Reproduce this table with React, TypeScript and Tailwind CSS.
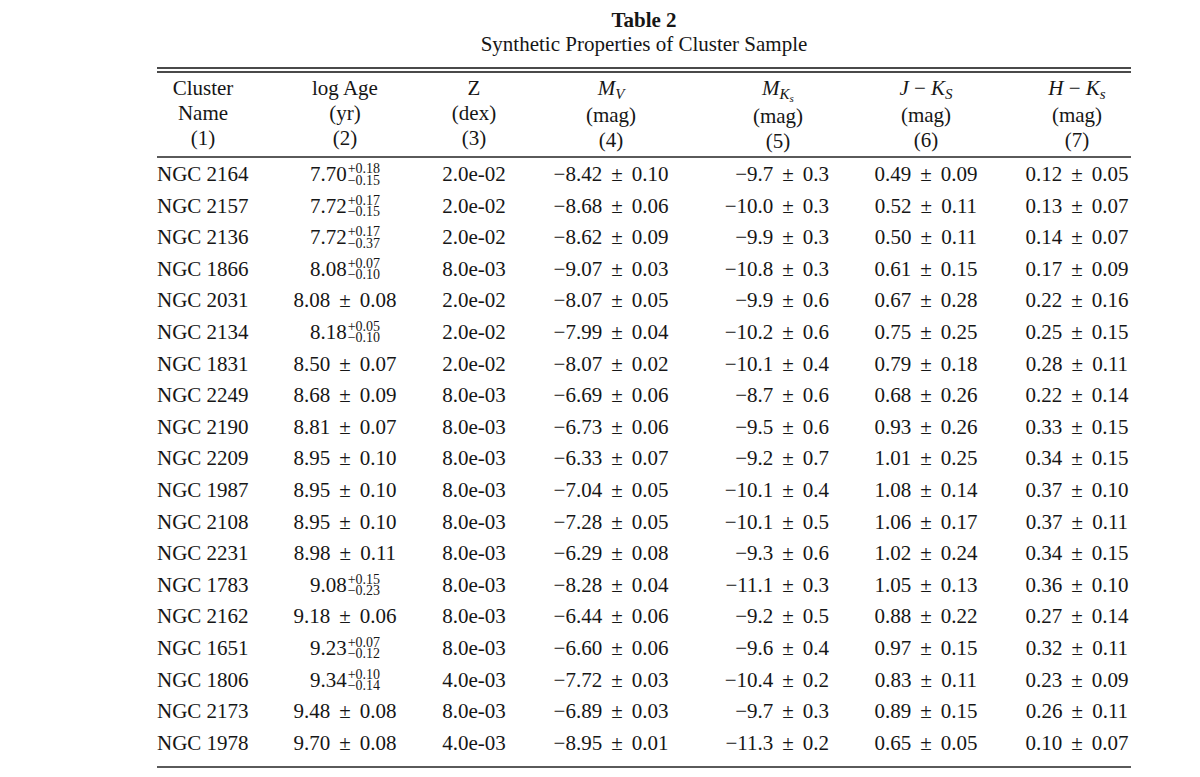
import React from "react";

type Pm = [string, string];
type Age = [string, string] | [string, string, string];
type Row = [string, Age, string, Pm, Pm, Pm, Pm];

const rows: Row[] = [
  ["NGC 2164", ["7.70", "+0.18", "−0.15"], "2.0e-02", ["−8.42", "0.10"], ["−9.7", "0.3"], ["0.49", "0.09"], ["0.12", "0.05"]],
  ["NGC 2157", ["7.72", "+0.17", "−0.15"], "2.0e-02", ["−8.68", "0.06"], ["−10.0", "0.3"], ["0.52", "0.11"], ["0.13", "0.07"]],
  ["NGC 2136", ["7.72", "+0.17", "−0.37"], "2.0e-02", ["−8.62", "0.09"], ["−9.9", "0.3"], ["0.50", "0.11"], ["0.14", "0.07"]],
  ["NGC 1866", ["8.08", "+0.07", "−0.10"], "8.0e-03", ["−9.07", "0.03"], ["−10.8", "0.3"], ["0.61", "0.15"], ["0.17", "0.09"]],
  ["NGC 2031", ["8.08", "0.08"], "2.0e-02", ["−8.07", "0.05"], ["−9.9", "0.6"], ["0.67", "0.28"], ["0.22", "0.16"]],
  ["NGC 2134", ["8.18", "+0.05", "−0.10"], "2.0e-02", ["−7.99", "0.04"], ["−10.2", "0.6"], ["0.75", "0.25"], ["0.25", "0.15"]],
  ["NGC 1831", ["8.50", "0.07"], "2.0e-02", ["−8.07", "0.02"], ["−10.1", "0.4"], ["0.79", "0.18"], ["0.28", "0.11"]],
  ["NGC 2249", ["8.68", "0.09"], "8.0e-03", ["−6.69", "0.06"], ["−8.7", "0.6"], ["0.68", "0.26"], ["0.22", "0.14"]],
  ["NGC 2190", ["8.81", "0.07"], "8.0e-03", ["−6.73", "0.06"], ["−9.5", "0.6"], ["0.93", "0.26"], ["0.33", "0.15"]],
  ["NGC 2209", ["8.95", "0.10"], "8.0e-03", ["−6.33", "0.07"], ["−9.2", "0.7"], ["1.01", "0.25"], ["0.34", "0.15"]],
  ["NGC 1987", ["8.95", "0.10"], "8.0e-03", ["−7.04", "0.05"], ["−10.1", "0.4"], ["1.08", "0.14"], ["0.37", "0.10"]],
  ["NGC 2108", ["8.95", "0.10"], "8.0e-03", ["−7.28", "0.05"], ["−10.1", "0.5"], ["1.06", "0.17"], ["0.37", "0.11"]],
  ["NGC 2231", ["8.98", "0.11"], "8.0e-03", ["−6.29", "0.08"], ["−9.3", "0.6"], ["1.02", "0.24"], ["0.34", "0.15"]],
  ["NGC 1783", ["9.08", "+0.15", "−0.23"], "8.0e-03", ["−8.28", "0.04"], ["−11.1", "0.3"], ["1.05", "0.13"], ["0.36", "0.10"]],
  ["NGC 2162", ["9.18", "0.06"], "8.0e-03", ["−6.44", "0.06"], ["−9.2", "0.5"], ["0.88", "0.22"], ["0.27", "0.14"]],
  ["NGC 1651", ["9.23", "+0.07", "−0.12"], "8.0e-03", ["−6.60", "0.06"], ["−9.6", "0.4"], ["0.97", "0.15"], ["0.32", "0.11"]],
  ["NGC 1806", ["9.34", "+0.10", "−0.14"], "4.0e-03", ["−7.72", "0.03"], ["−10.4", "0.2"], ["0.83", "0.11"], ["0.23", "0.09"]],
  ["NGC 2173", ["9.48", "0.08"], "8.0e-03", ["−6.89", "0.03"], ["−9.7", "0.3"], ["0.89", "0.15"], ["0.26", "0.11"]],
  ["NGC 1978", ["9.70", "0.08"], "4.0e-03", ["−8.95", "0.01"], ["−11.3", "0.2"], ["0.65", "0.05"], ["0.10", "0.07"]],
];

// column grid: centres at 203, 345, 474, 611, 778, 926, 1077
const cols = "grid grid-cols-[92px_192px_66px_208px_126px_170px_132px] w-[986px]";

function PlusMinus({ v }: { v: Pm }) {
  return (
    <span className="whitespace-nowrap">
      {v[0]}
      <span className="px-[9px]">±</span>
      {v[1]}
    </span>
  );
}

function AgeCell({ a }: { a: Age }) {
  if (a.length === 2) return <PlusMinus v={a} />;
  return (
    <span className="whitespace-nowrap">
      {a[0]}
      <span className="relative -top-[8px] ml-[1px] inline-flex flex-col text-left text-[14px] leading-[11.5px]">
        <span>{a[1]}</span>
        <span>{a[2]}</span>
      </span>
    </span>
  );
}

function Sub({ children, small }: { children: React.ReactNode; small?: boolean }) {
  return (
    <span className={small ? "relative top-[3px] text-[11px] italic" : "relative top-[4px] text-[15px] italic"}>
      {children}
    </span>
  );
}

function HeadCell({ top, unit, num }: { top: React.ReactNode; unit: string; num: number }) {
  return (
    <div className="flex flex-col items-center whitespace-nowrap">
      <span>{top}</span>
      <span>{unit}</span>
      <span>({num})</span>
    </div>
  );
}

export default function App() {
  return (
    <div className="w-[1200px] h-[777px] overflow-hidden bg-white text-[#161616] font-['Liberation_Serif',serif] text-[21px]">
      <div className="ml-[157px] w-[974px] pt-[8px]">
        <div className="text-center leading-[24px]">
          <div className="font-bold">Table 2</div>
          <div>Synthetic Properties of Cluster Sample</div>
        </div>

        <div className="mt-[11px] h-[2px] bg-[#4a4a4a]" />
        <div className="mt-[2px] h-[2px] bg-[#4a4a4a]" />

        <div className={`${cols} pt-[3px] leading-[25px]`}>
          <HeadCell top="Cluster" unit="Name" num={1} />
          <HeadCell top="log Age" unit="(yr)" num={2} />
          <HeadCell top="Z" unit="(dex)" num={3} />
          <HeadCell
            top={
              <>
                <i>M</i>
                <Sub>V</Sub>
              </>
            }
            unit="(mag)"
            num={4}
          />
          <HeadCell
            top={
              <>
                <i>M</i>
                <Sub>
                  K<Sub small>s</Sub>
                </Sub>
              </>
            }
            unit="(mag)"
            num={5}
          />
          <HeadCell
            top={
              <>
                <i>J</i> − <i>K</i>
                <Sub>S</Sub>
              </>
            }
            unit="(mag)"
            num={6}
          />
          <HeadCell
            top={
              <>
                <i>H</i> − <i>K</i>
                <Sub>s</Sub>
              </>
            }
            unit="(mag)"
            num={7}
          />
        </div>

        <div className="mt-[2px] h-[2px] bg-[#5a5a5a]" />

        <div className="pt-[1px]">
          {rows.map((r) => (
            <div key={r[0]} className={`${cols} h-[31.6px] leading-[31.6px]`}>
              <div className="whitespace-nowrap text-left">{r[0]}</div>
              <div className="text-center">
                <AgeCell a={r[1]} />
              </div>
              <div className="text-center whitespace-nowrap">{r[2]}</div>
              <div className="text-center">
                <PlusMinus v={r[3]} />
              </div>
              <div className="text-right pr-[12px]">
                <PlusMinus v={r[4]} />
              </div>
              <div className="text-center">
                <PlusMinus v={r[5]} />
              </div>
              <div className="text-center">
                <PlusMinus v={r[6]} />
              </div>
            </div>
          ))}
        </div>

        <div className="mt-[7px] h-[2px] bg-[#5a5a5a]" />
      </div>
    </div>
  );
}
